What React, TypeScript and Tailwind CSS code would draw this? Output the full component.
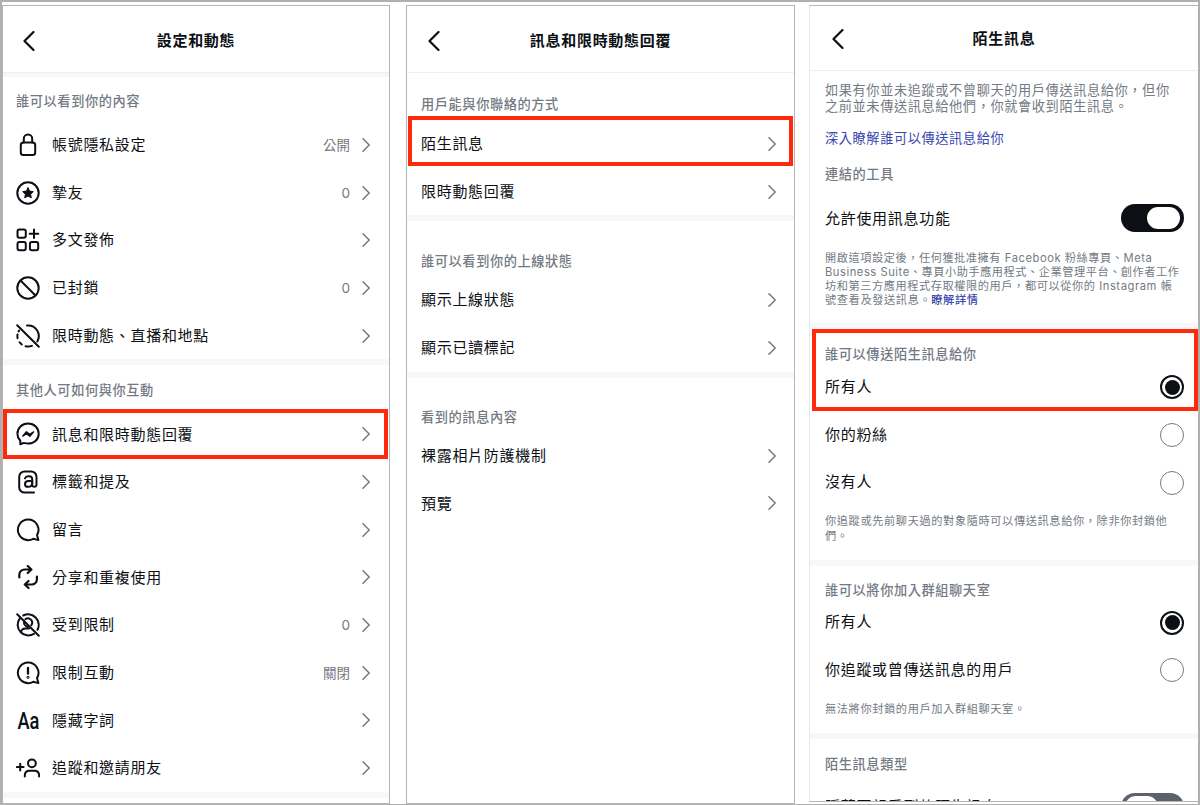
import type { ReactNode } from 'react'

type Row = { label: string; icon?: ReactNode; value?: string; mark?: string }

const Svg = ({ children }: { children: ReactNode }) => (
    <svg viewBox="0 0 24 24" className="h-6 w-6 shrink-0" fill="none" stroke="#0c1014" strokeWidth="2" strokeLinecap="round" strokeLinejoin="round">
        {children}
    </svg>
)

const bubble = 'M12 1.500A10.300 10.300 0 1 0 17.200 20.800l5.200 1.300-1.400-5A10.300 10.300 0 0 0 12 1.500z'

const icons = {
    lock: (
        <Svg>
            <rect x="4.800" y="9.500" width="14.400" height="12.600" rx="2.600" />
            <path d="M7.800 9.500V5.700a4.200 4.200 0 0 1 8.400 0v3.800" />
        </Svg>
    ),
    star: (
        <Svg>
            <circle cx="12" cy="12" r="10.700" />
            <path d="M12 6.800l1.600 3.300 3.700.5-2.700 2.600.7 3.600-3.300-1.700-3.300 1.700.7-3.600-2.700-2.600 3.700-.5z" fill="#0c1014" strokeWidth="1" />
        </Svg>
    ),
    grid: (
        <Svg>
            <rect x="1.500" y="1.500" width="8.300" height="8.300" rx="2" />
            <rect x="1.500" y="13.900" width="8.300" height="8.300" rx="2" />
            <rect x="13.900" y="13.900" width="8.300" height="8.300" rx="2" />
            <path d="M18 1.500v8.600M13.700 5.800h8.600" />
        </Svg>
    ),
    block: (
        <Svg>
            <circle cx="12" cy="12" r="10.700" />
            <path d="M4.500 4.500l15 15" />
        </Svg>
    ),
    hidden: (
        <Svg>
            <path d="M1.200 1.200l21.600 21.600" />
            <path d="M11 1.500A10.600 10.600 0 0 1 21.300 17.400" />
            <path d="M1.500 10.500a10.500 10.500 0 0 0 .1 3.700M3.600 18.200a10.500 10.500 0 0 0 2.200 2.300M9.600 22.300a10.500 10.500 0 0 0 6.300-.4M3.100 6.600l-.5.9" />
        </Svg>
    ),
    messenger: (
        <Svg>
            <path d="M12.100 1.500C6 1.500 1.400 5.900 1.400 11.800c0 3 1.200 5.200 2.900 7v3.500l3.600-1.400c1.200.4 2.600.7 4.200.7 6.200 0 10.600-4.200 10.600-9.900S18.300 1.500 12.100 1.500z" />
            <path d="M6.700 14.100l3.700-4.300 3.300 2.600 3.900-2.500-3.700 4.400-3.400-2.600z" fill="#0c1014" strokeWidth="1.400" />
        </Svg>
    ),
    at: (
        <Svg>
            <path d="M18 22.500H8.500a5.300 5.300 0 0 1-5.300-5.300V6.800a5.300 5.300 0 0 1 5.300-5.300h6.700a5.300 5.300 0 0 1 5.300 5.300v8.300a2.200 2.200 0 0 1-4.300 0V9.300c0-1.900-1.200-3-3-3h-1c-1.600 0-2.700.7-3.200 2" />
            <path d="M16.200 11h-3.700c-2 0-3.500 1-3.500 2.900s1.300 2.900 3 2.900c2.400 0 4.200-1.500 4.200-3.900z" />
        </Svg>
    ),
    comment: (
        <Svg>
            <path d={bubble} />
        </Svg>
    ),
    reuse: (
        <Svg>
            <path d="M3.300 12.500V9.700a5.200 5.200 0 0 1 5.200-5.200h6.800M11.700 1l3.700 3.500-3.700 3.500" strokeWidth="2.200" />
            <path d="M20.900 11.500v2.800a5.200 5.200 0 0 1-5.200 5.200H8.900M12.500 23l-3.700-3.500 3.700-3.500" strokeWidth="2.200" />
        </Svg>
    ),
    restricted: (
        <Svg>
            <path d="M1.200 1.200l21.600 21.600" />
            <path d="M7.300 2.500A10.600 10.600 0 0 1 21.500 16.800M3.700 5.600a10.600 10.600 0 0 0 14.200 15.200" />
            <path d="M9.300 6.200a4.300 4.300 0 0 1 6 6M8 9.200a4.300 4.300 0 0 0 3.800 4.500M5 19.300c.3-2.600 2-3.900 4.400-3.900h3.600" />
        </Svg>
    ),
    limit: (
        <Svg>
            <path d={bubble} />
            <path d="M12 6.900v5.800" strokeWidth="2.300" />
            <circle cx="12" cy="16.300" r=".5" />
        </Svg>
    ),
    words: (
        <span className="flex h-6 w-6 shrink-0 items-center justify-center">
            <span className="scale-x-[.76] pt-px font-[Roboto] text-[24px] leading-6 font-medium tracking-normal text-[#0c1014]">Aa</span>
        </span>
    ),
    invite: (
        <Svg>
            <circle cx="15.900" cy="7.300" r="3.900" />
            <path d="M8.800 20.500v-.8c0-3 1.900-4.900 4.800-4.900h4.700c2.900 0 4.800 1.900 4.800 4.900v.8M4.200 7.700v6.800M.9 11.100h6.700" />
        </Svg>
    ),
}

const visibility: Row[] = [
    { label: '帳號隱私設定', icon: icons.lock, value: '公開' },
    { label: '摯友', icon: icons.star, value: '0' },
    { label: '多文發佈', icon: icons.grid },
    { label: '已封鎖', icon: icons.block, value: '0' },
    { label: '限時動態、直播和地點', icon: icons.hidden },
]

const interactions: Row[] = [
    { label: '訊息和限時動態回覆', icon: icons.messenger, mark: 'left-0 right-px -top-px -bottom-px' },
    { label: '標籤和提及', icon: icons.at },
    { label: '留言', icon: icons.comment },
    { label: '分享和重複使用', icon: icons.reuse },
    { label: '受到限制', icon: icons.restricted, value: '0' },
    { label: '限制互動', icon: icons.limit, value: '關閉' },
    { label: '隱藏字詞', icon: icons.words },
    { label: '追蹤和邀請朋友', icon: icons.invite },
]

function Header({ title, className }: { title: string; className: string }) {
    return (
        <header className={`relative flex shrink-0 items-center justify-center border-b border-[#efefef] ${className}`}>
            <svg viewBox="0 0 12 20" className="absolute left-5 h-5 w-3" fill="none" stroke="#0c1014" strokeWidth="2.200" strokeLinecap="round" strokeLinejoin="round">
                <path d="M10.500 1L1.500 10l9 9" />
            </svg>
            <h1 className="pt-0.5 text-[15px] font-bold tracking-[.7px]">{title}</h1>
        </header>
    )
}

const Label = ({ children, className }: { children: ReactNode; className: string }) => (
    <h2 className={`flex shrink-0 items-center text-[13.200px] font-medium tracking-[.6px] text-[#737a83] ${className}`}>{children}</h2>
)

const Divider = () => <div className="h-1.5 shrink-0 bg-[#f8f8f8]" />

function Rows({ rows }: { rows: Row[] }) {
    return (
        <ul>
            {rows.map(({ label, icon, value, mark }) => (
                <li key={label} className={`relative flex h-[47.7px] items-center text-[15px] tracking-[.7px] ${icon ? 'pr-[19px] pl-[13px]' : 'pr-[18px] pl-[14px]'}`}>
                    {icon}
                    <span className={icon ? 'ml-3 pt-px' : 'pt-px'}>{label}</span>
                    <span className="mr-3 ml-auto pt-px text-[13.500px] tracking-normal text-[#737a83]">{value}</span>
                    <svg viewBox="0 0 8 14" className="h-3.5 w-2" fill="none" stroke="#737a83" strokeWidth="1.500" strokeLinecap="round" strokeLinejoin="round">
                        <path d="M1 .8L7.200 7 1 13.200" />
                    </svg>
                    {mark && <span className={`absolute border-4 border-[#fd2b0b] ${mark}`} />}
                </li>
            ))}
        </ul>
    )
}

function Radio({ label, checked }: { label: string; checked?: boolean }) {
    return (
        <div className="flex h-[47.7px] shrink-0 items-center justify-between pr-3.5 pl-[15px] text-[15px] tracking-[.7px]">
            <span>{label}</span>
            <span className={`flex h-6 w-6 items-center justify-center rounded-full ${checked ? 'border-2 border-[#0c1014]' : 'border-[1.500px] border-[#737a83]'}`}>
                {checked && <span className="h-[15px] w-[15px] rounded-full bg-[#0c1014]" />}
            </span>
        </div>
    )
}

const Note = ({ children, className }: { children: ReactNode; className: string }) => (
    <p className={`shrink-0 pl-[15px] text-[11.200px] leading-[14.200px] tracking-[.62px] whitespace-nowrap text-[#737a83] ${className}`}>{children}</p>
)

export default function App() {
    return (
        <main className="flex h-[805px] w-[1200px] overflow-hidden border-t-2 border-r-2 border-b border-l-2 border-[#b0b0b0] bg-white pt-[3px] font-['Inter','Noto_Sans_CJK_TC',sans-serif] text-[#0c1014]">
            <section className="flex w-[388px] shrink-0 flex-col overflow-hidden border border-[#b5b5b5]">
                <Header title="設定和動態" className="h-[67px] pt-[3px]" />
                <div className="h-1 shrink-0 bg-[#f8f8f8]" />
                <Label className="mt-[15px] h-5 pl-[13px]">誰可以看到你的內容</Label>
                <div className="mt-[9px]"><Rows rows={visibility} /></div>
                <Divider />
                <Label className="mt-[15px] h-5 pl-[13px]">其他人可如何與你互動</Label>
                <div className="mt-[10px]"><Rows rows={interactions} /></div>
                <Divider />
            </section>

            <section className="ml-4 flex w-[389px] shrink-0 flex-col overflow-hidden border border-[#b5b5b5]">
                <Header title="訊息和限時動態回覆" className="h-[67px] pt-[3px] [&>svg]:left-[21px]" />
                <Label className="mt-[22px] h-5 pl-[14px]">用戶能與你聯絡的方式</Label>
                <div className="mt-[5px]"><Rows rows={[{ label: '陌生訊息', mark: 'left-px right-px -top-1 bottom-0.5' }, { label: '限時動態回覆' }]} /></div>
                <Divider />
                <Label className="mt-[31px] h-5 pl-[14px]">誰可以看到你的上線狀態</Label>
                <div className="mt-[4px]"><Rows rows={[{ label: '顯示上線狀態' }, { label: '顯示已讀標記' }]} /></div>
                <Divider />
                <Label className="mt-[30px] h-5 pl-[14px]">看到的訊息內容</Label>
                <div className="mt-[4px]"><Rows rows={[{ label: '裸露相片防護機制' }, { label: '預覽' }]} /></div>
            </section>

            <section className="ml-[14px] flex h-[797px] w-[389px] shrink-0 flex-col overflow-hidden border border-r-0 border-[#b5b5b5] border-l-[#e8e8e8]">
                <Header title="陌生訊息" className="h-[65px] pt-px [&>svg]:left-[22px]" />
                <p className="mt-3 shrink-0 pl-[15px] text-[13.200px] leading-[15.800px] tracking-[.6px] whitespace-nowrap text-[#737a83]">
                    如果有你並未追蹤或不曾聊天的用戶傳送訊息給你，但你
                    <br />
                    之前並未傳送訊息給他們，你就會收到陌生訊息。
                </p>
                <a className="mt-[14px] flex h-5 shrink-0 items-center pl-[15px] text-[13.200px] tracking-[.6px] text-[#3a46ad]">深入瞭解誰可以傳送訊息給你</a>
                <Label className="mt-4 h-5 pl-[15px]">連結的工具</Label>
                <div className="mt-[10px] flex h-[48px] shrink-0 items-center justify-between pr-3.5 pl-[15px] text-[15px] tracking-[.7px]">
                    <span className="pt-px">允許使用訊息功能</span>
                    <span className="mb-0.5 flex h-7 w-[63px] items-center justify-end rounded-full bg-[#0c1014] pr-1">
                        <span className="h-[22px] w-[33px] rounded-full bg-white" />
                    </span>
                </div>
                <Note className="mt-2">
                    <span className="tracking-[.55px]">開啟這項設定後，任何獲批准擁有 Facebook 粉絲專頁、Meta</span>
                    <br />
                    <span className="tracking-[.54px]">Business Suite、專頁小助手應用程式、企業管理平台、創作者工作</span>
                    <br />
                    <span className="tracking-[.57px]">坊和第三方應用程式存取權限的用戶，都可以從你的 Instagram 帳</span>
                    <br />
                    號查看及發送訊息。<a className="font-medium text-[#3a46ad]">瞭解詳情</a>
                </Note>
                <div className="mt-[16px]"><Divider /></div>
                <div className="relative shrink-0">
                    <Label className="mt-[15px] h-5 pl-[15px]">誰可以傳送陌生訊息給你</Label>
                    <div className="-mt-px"><Radio label="所有人" checked /></div>
                    <span className="absolute top-0 right-0 bottom-0 left-0.5 border-4 border-[#fd2b0b]" />
                </div>
                <Radio label="你的粉絲" />
                <Radio label="沒有人" />
                <Note className="mt-[8px]">
                    你追蹤或先前聊天過的對象隨時可以傳送訊息給你，除非你封鎖他
                    <br />
                    們。
                </Note>
                <div className="mt-[17px]"><Divider /></div>
                <Label className="mt-[15px] h-5 pl-[15px]">誰可以將你加入群組聊天室</Label>
                <div className="-mt-[2px]">
                    <Radio label="所有人" checked />
                    <Radio label="你追蹤或曾傳送訊息的用戶" />
                </div>
                <Note className="mt-[8px]">無法將你封鎖的用戶加入群組聊天室。</Note>
                <div className="mt-[17px]"><Divider /></div>
                <Label className="mt-[15px] h-5 pl-[15px]">陌生訊息類型</Label>
                <div className="mt-[19px] flex h-7 shrink-0 items-center justify-between pr-3.5 pl-[15px] text-[15px] tracking-[.7px]">
                    <span>隱藏不想看到的陌生訊息</span>
                    <span className="flex h-7 w-[63px] items-center rounded-full bg-[#5b626b] pl-1">
                        <span className="h-[22px] w-[33px] rounded-full bg-white" />
                    </span>
                </div>
            </section>
        </main>
    )
}
